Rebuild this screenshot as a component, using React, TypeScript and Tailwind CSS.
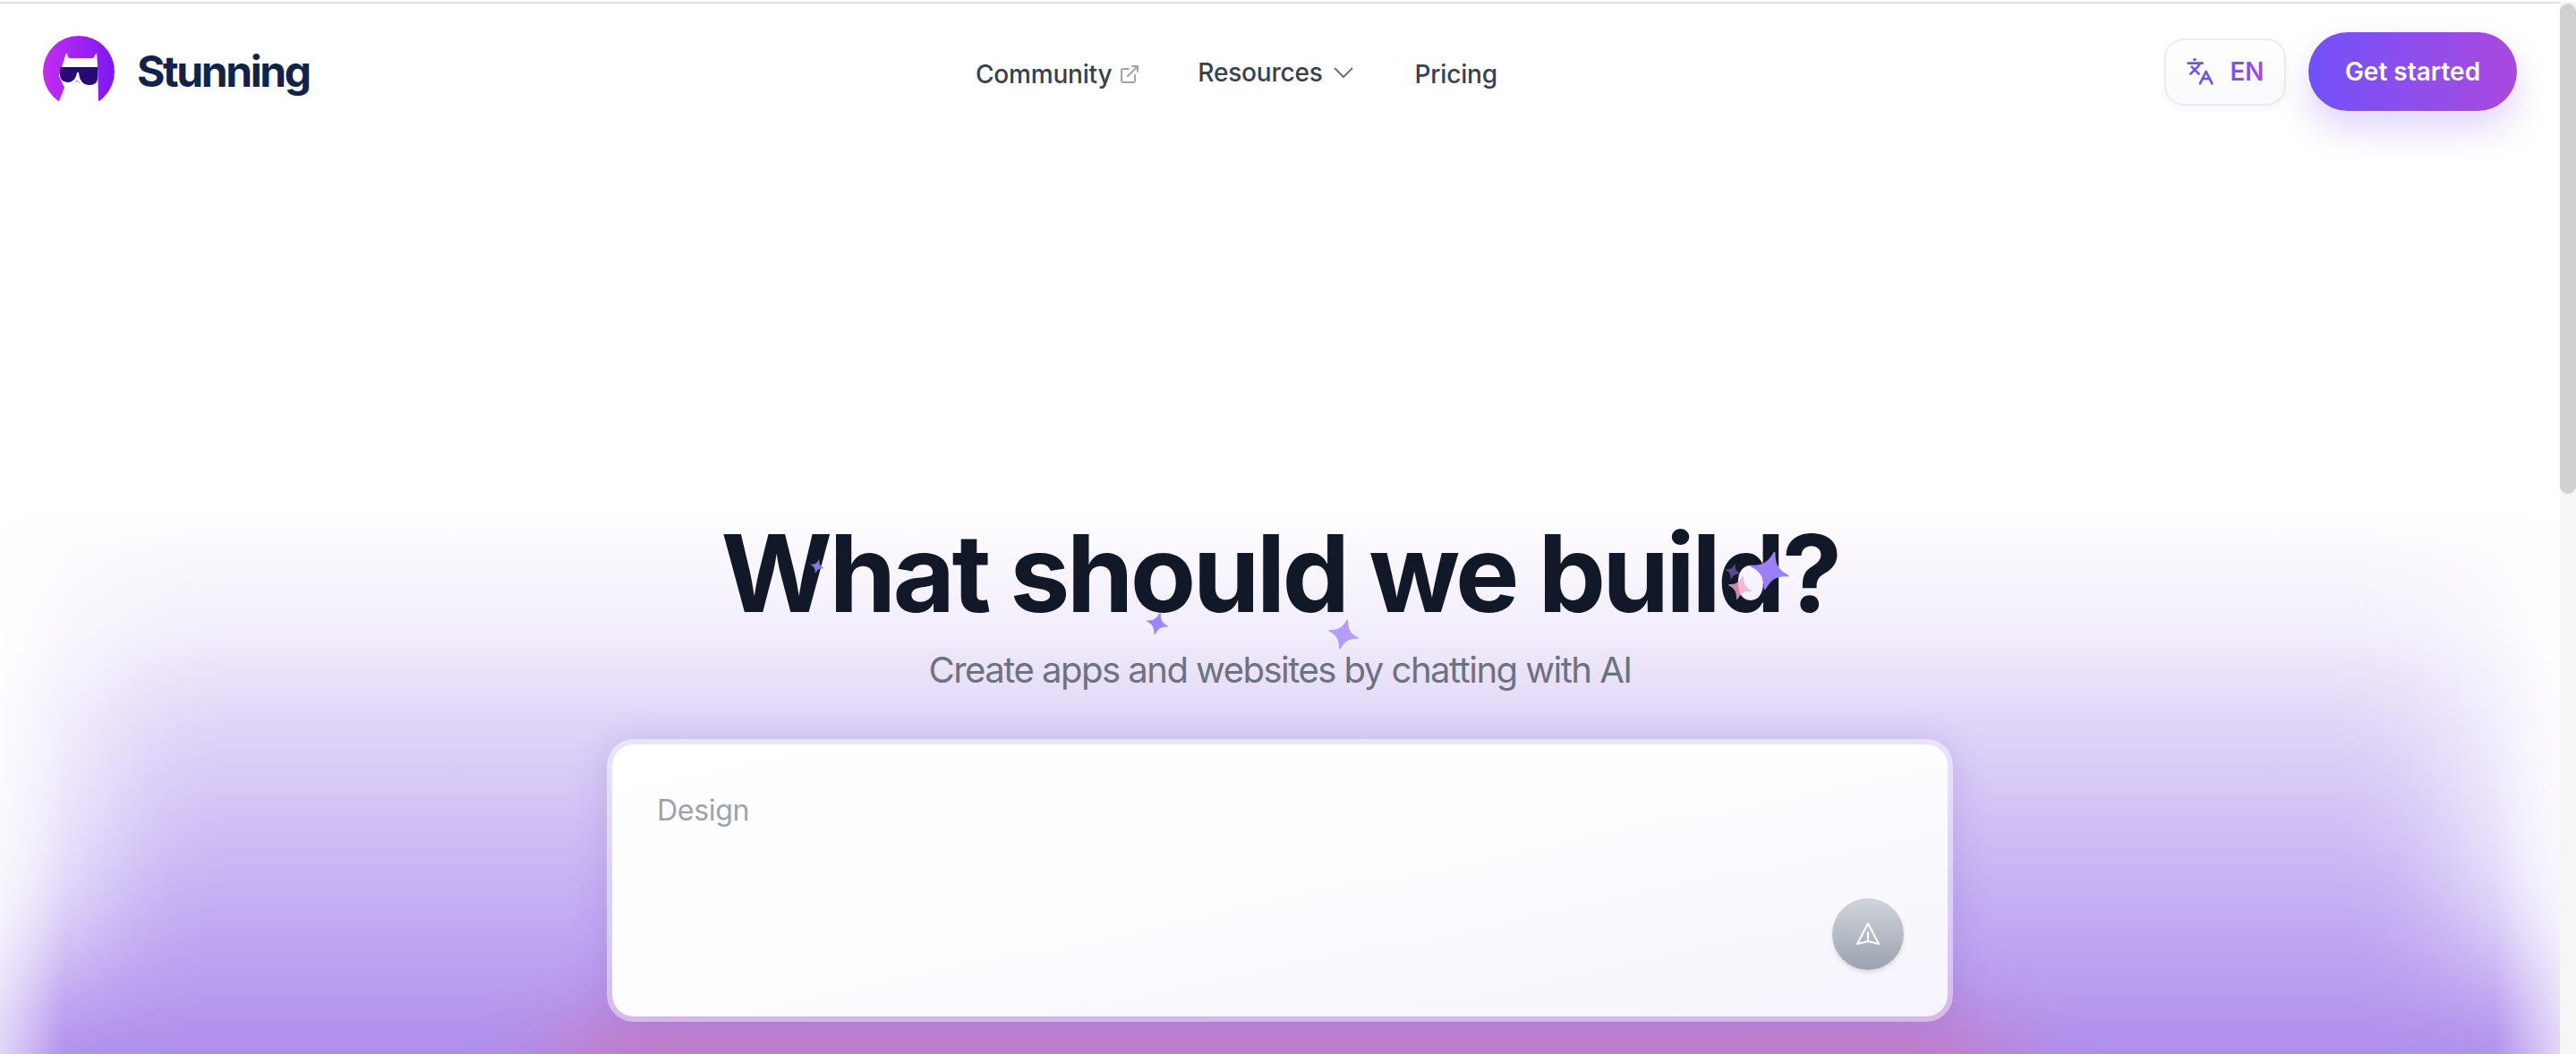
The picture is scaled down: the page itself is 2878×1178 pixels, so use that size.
import React from 'react';
import { ExternalLink, Languages } from 'lucide-react';

const Sparkle = ({ className }: { className: string }) => (
  <svg viewBox="0 0 24 24" className={`absolute ${className}`} fill="currentColor">
    <path d="M12 1C13.5 6.5 15.5 10.5 23 12C15.5 13.5 13.5 17.5 12 23C10.5 17.5 8.5 13.5 1 12C8.5 10.5 10.5 6.5 12 1Z" stroke="currentColor" strokeWidth="1" strokeLinejoin="round" />
  </svg>
);

const Logo = () => (
  <svg viewBox="0 0 80 80" className="h-20 w-20 shrink-0">
    <defs>
      <linearGradient id="logoFill" x1="0" y1="0" x2="1" y2="0">
        <stop offset="0" stopColor="#c42cf4" />
        <stop offset="1" stopColor="#7d18f2" />
      </linearGradient>
      <clipPath id="logoClip">
        <rect x="0" y="0" width="80" height="73" />
      </clipPath>
    </defs>
    <g clipPath="url(#logoClip)">
      <circle cx="40" cy="40" r="40" fill="url(#logoFill)" />
      <path d="M26 19L29 25H56L60 19L61 33L62 73H18L24 58L18 45L21 35Z" fill="#fff" />
      <path d="M19 35H61V47C61 53 57 55 52 55C45 55 41 51 40 41H38C37 48 33 52 28 52C22 52 19 48 19 44Z" fill="#270a74" />
      <path d="M36 52L38 50L41 53" fill="none" stroke="#9a92b0" strokeWidth="1" />
    </g>
  </svg>
);

export default function App() {
  return (
    <div className="relative h-[1178px] overflow-hidden bg-white font-['Inter',sans-serif]">
      {/* purple glow behind the hero */}
      <div className="absolute left-0 right-[18px] top-[560px] h-[618px] bg-[linear-gradient(to_bottom,#ffffff00_0%,#f3eefb_23%,#e2d7f8_39%,#c5b0f3_71%,#af8fec_100%)] [mask-image:linear-gradient(to_right,#00000066_0%,#000_2.5%,#000_97.5%,#00000066_100%)]" />
      <div className="absolute left-[-170px] top-[500px] h-[600px] w-[280px] rounded-full bg-white opacity-80 blur-[70px]" />
      <div className="absolute right-[-150px] top-[500px] h-[600px] w-[280px] rounded-full bg-white opacity-80 blur-[70px]" />
      <div className="absolute bottom-[-150px] left-[600px] right-[620px] h-[190px] rounded-full bg-[#cc74b8] opacity-75 blur-[45px]" />

      <div className="relative mr-[18px] mt-0.5 flex h-full flex-col border-t-2 border-t-[#e2e2e2]">
        <header className="relative flex h-[156px] items-start justify-between pl-12 pr-[48px] pt-[32px]">
          <div className="flex items-center gap-[25px] pt-1">
            <Logo />
            <span className="text-[48px] font-bold leading-none tracking-[-2.4px] text-[#10244b]">Stunning</span>
          </div>
          <nav className="absolute left-[1090px] top-[63px] flex items-center text-[28px] font-medium leading-none tracking-[-0.2px] text-[#374151]">
            <a className="flex items-center gap-2">
              Community
              <ExternalLink className="h-6 w-6 text-[#9ca3af]" strokeWidth={2} />
            </a>
            <a className="mb-1 ml-[64px] flex items-center gap-3">
              Resources
              <svg viewBox="0 0 22 13" className="h-[13px] w-[22px] text-[#6b7280]" fill="none" stroke="currentColor" strokeWidth="2">
                <path d="M1 1L11 11L21 1" />
              </svg>
            </a>
            <a className="ml-[69px]">Pricing</a>
          </nav>
          <div className="flex items-center gap-[25px]">
            <button className="flex h-[75px] w-[136px] items-center justify-center gap-[17px] rounded-[22px] border-2 border-[#eaebef] bg-gradient-to-b from-white to-[#f9fafb] shadow-[0_4px_12px_rgba(0,0,0,0.04)]">
              <Languages className="h-8 w-8 text-[#7050f8]" strokeWidth={2} />
              <span className="bg-gradient-to-r from-[#7c4ff0] to-[#a848e0] bg-clip-text text-[28px] font-semibold text-transparent">EN</span>
            </button>
            <button className="h-[88px] w-[233px] rounded-full bg-gradient-to-r from-[#7050f8] to-[#aa48de] text-[28px] font-semibold text-white shadow-[0_20px_40px_rgba(124,58,237,0.22)]">
              Get started
            </button>
          </div>
        </header>

        <main className="flex flex-col items-center pt-[421px]">
          <h1 className="relative text-[120px] font-bold leading-none tracking-[-3.7px] text-[#111827]">
            What should we build?
          </h1>
          <p className="mt-[18px] text-[40px] leading-[60px] tracking-[-1.5px] text-[#6b7280]">Create apps and websites by chatting with AI</p>
          <div className="relative mt-[47px] h-[316px] w-[1504px] rounded-[30px] border-[6px] border-[#ffffff66] bg-clip-padding shadow-[0_0_40px_rgba(90,50,180,0.18)]">
            <div className="relative h-full rounded-[24px] bg-gradient-to-br from-white via-[#fdfcff] to-[#f6f4fd] pl-[50px] pt-[58px] text-[32px] leading-none tracking-[-0.3px] text-[#9ca3af]">
              Design
              <button className="absolute bottom-[52px] right-[49px] flex h-20 w-20 items-center justify-center rounded-full bg-gradient-to-b from-[#d1d5db] to-[#9ca3af] shadow-md">
                <svg viewBox="0 0 28 28" className="h-7 w-7" fill="none" stroke="white" strokeWidth="2" strokeLinejoin="round" strokeLinecap="round">
                  <path d="M14 2L26 25L14 22L2 25Z" />
                  <path d="M14 12V22" />
                </svg>
              </button>
            </div>
          </div>
        </main>
      </div>

      {/* sparkles */}
      <Sparkle className="left-[905px] top-[625px] h-4 w-4 rotate-[15deg] text-[#8a76e6]" />
      <Sparkle className="left-[1280px] top-[684px] h-[26px] w-[26px] rotate-[15deg] text-[#9d85f9]" />
      <Sparkle className="left-[1483px] top-[691px] h-9 w-9 rotate-[15deg] text-[#b49dfa]" />
      <Sparkle className="left-[1927px] top-[630px] h-[18px] w-[18px] rotate-[15deg] text-[#9b7ff8] opacity-50" />
      <Sparkle className="left-[1930px] top-[643px] h-7 w-7 rotate-[15deg] text-[#f5a8cc] opacity-80" />
      <Sparkle className="left-[1954px] top-[615px] h-[46px] w-[46px] rotate-[15deg] text-[#9b7ff8]" />

      {/* scrollbar */}
      <div className="absolute inset-y-0 right-0 top-0.5 w-[18px] bg-[#f6f6f6]">
        <div className="mt-0.5 h-[548px] rounded-full bg-[#d1d1d1]" />
      </div>
    </div>
  );
}
